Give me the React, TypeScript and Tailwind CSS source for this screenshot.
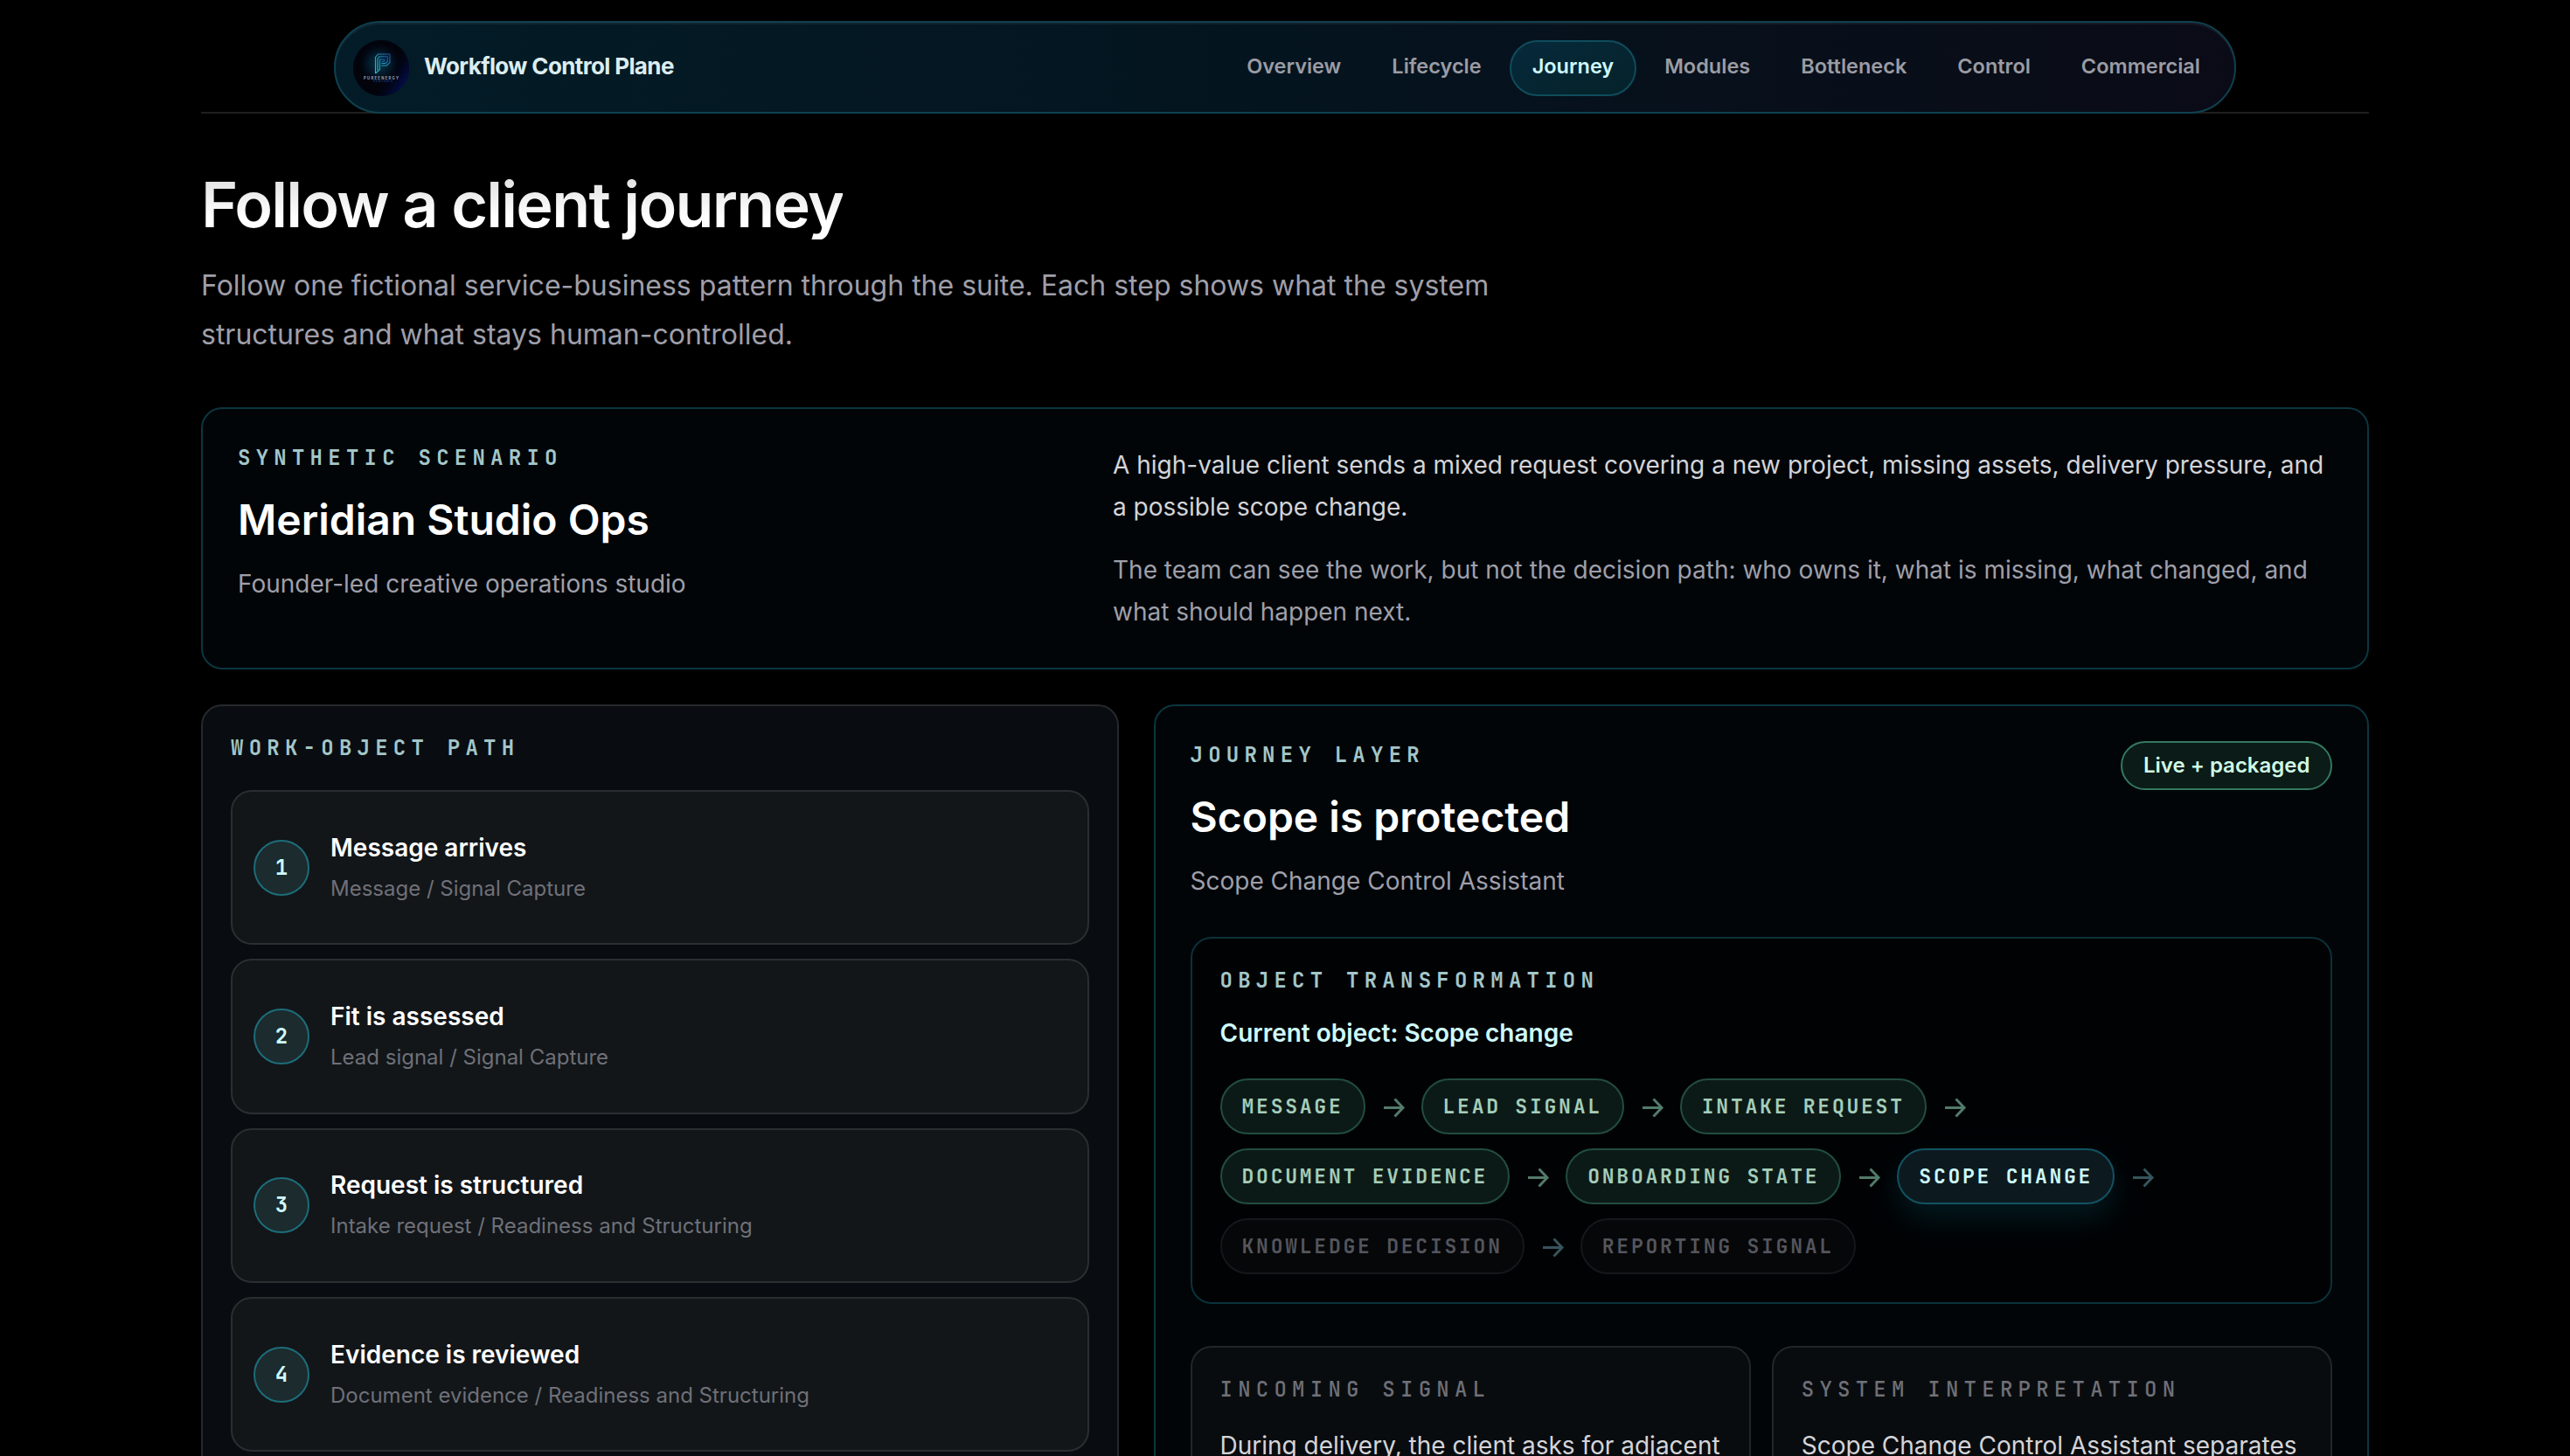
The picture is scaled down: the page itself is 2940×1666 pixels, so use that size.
import clsx from 'clsx'

type ChipState = 'done' | 'current' | 'upcoming'

interface Step {
  title: string;
  detail: string;
}

interface WorkObject {
  label: string;
  state: ChipState;
}

const navLinks = ['Overview', 'Lifecycle', 'Journey', 'Modules', 'Bottleneck', 'Control', 'Commercial']

const steps: Step[] = [
  { title: 'Message arrives', detail: 'Message / Signal Capture' },
  { title: 'Fit is assessed', detail: 'Lead signal / Signal Capture' },
  { title: 'Request is structured', detail: 'Intake request / Readiness and Structuring' },
  { title: 'Evidence is reviewed', detail: 'Document evidence / Readiness and Structuring' },
]

const workObjects: WorkObject[] = [
  { label: 'Message', state: 'done' },
  { label: 'Lead signal', state: 'done' },
  { label: 'Intake request', state: 'done' },
  { label: 'Document evidence', state: 'done' },
  { label: 'Onboarding state', state: 'done' },
  { label: 'Scope change', state: 'current' },
  { label: 'Knowledge decision', state: 'upcoming' },
  { label: 'Reporting signal', state: 'upcoming' },
]

const details = [
  { label: 'Incoming signal', text: 'During delivery, the client asks for adjacent' },
  { label: 'System interpretation', text: 'Scope Change Control Assistant separates' },
]

function Logo() {
  return (
    <svg viewBox="0 0 64 64" className="h-16 w-16 shrink-0 rounded-full">
      <defs>
        <radialGradient id="logoGlow" cx="0.47" cy="0.42" r="0.4">
          <stop offset="0" stopColor="#06394d" />
          <stop offset="0.55" stopColor="#031525" />
          <stop offset="1" stopColor="#02030c" stopOpacity="0" />
        </radialGradient>
        <linearGradient id="logoEdge" x1="0.6" y1="0.5" x2="1" y2="0.75">
          <stop offset="0" stopColor="#02030c" stopOpacity="0" />
          <stop offset="1" stopColor="#04105c" />
        </linearGradient>
        <linearGradient id="logoStroke" x1="0" y1="1" x2="1" y2="0">
          <stop offset="0" stopColor="#2ec4c9" />
          <stop offset="0.6" stopColor="#2590b8" />
          <stop offset="1" stopColor="#1c4fa0" />
        </linearGradient>
      </defs>
      <rect width="64" height="64" fill="#02030b" />
      <rect width="64" height="64" fill="url(#logoEdge)" />
      <rect width="64" height="64" fill="url(#logoGlow)" />
      <g fill="none" stroke="url(#logoStroke)" strokeWidth="1.1">
        <path d="M25.5 38V19.5l3-3.5h13.5v9.5l-3.5 3.5h-6" />
        <path d="M28 34.5V21l2-2.2h9.3v5.7l-2 2h-4.8" />
        <path d="M25.5 38l5-4.5V22h5.2v2.3h-2.5" />
      </g>
      <text x="12" y="44.6" textLength="40" fontSize="4.2" fontWeight="700" fill="#9aa3b2" className="font-['Inter',sans-serif]">PUREENERGY</text>
      <text x="23" y="48" textLength="22" fontSize="2.8" fontWeight="600" fill="#23448f" className="font-['Inter',sans-serif]">VENTURES</text>
    </svg>
  )
}

function Header() {
  return (
    <header className="flex h-[130px] justify-center border-b-2 border-[#1f1f1f] pt-6">
      <nav className="flex h-[106px] w-[2176px] shrink-0 items-start justify-between rounded-full border-2 border-[#0f4150] bg-linear-to-r from-[#031c27] via-[#04141f] to-[#0a0b16] pt-5 pr-[13px] pl-5 shadow-[inset_0_2px_0_rgba(255,255,255,0.06)]">
        <div className="flex h-16 items-center gap-[17px]">
          <Logo />
          <span className="pb-[6px] text-[26px] font-bold tracking-[-0.63px] text-[#dcedf0]">Workflow Control Plane</span>
        </div>
        <div className="flex gap-[6px]">
          {navLinks.map((link) => (
            <a
              key={link}
              className={clsx(
                'flex h-16 items-center rounded-full border-2 px-6 pb-[5px] text-[23.5px] font-semibold',
                link === 'Journey' ? 'border-[#0f4d5c] bg-linear-to-br from-[#06293b] to-[#052229] text-cyan-100' : 'border-transparent text-[#9a9ca4]'
              )}
            >
              {link}
            </a>
          ))}
        </div>
      </nav>
    </header>
  )
}

// Small monospaced heading above a title
function Eyebrow({ children, muted = false }: { children: string; muted?: boolean }) {
  return (
    <p
      className={clsx(
        "font-['JetBrains_Mono','DejaVu_Sans_Mono',monospace] text-[24px] leading-[24px] tracking-[6.25px] uppercase",
        muted ? 'font-medium text-[#6f7078]' : 'font-bold text-[#a3c6c9]'
      )}
    >
      {children}
    </p>
  )
}

function Scenario() {
  return (
    <section className="mt-[55px] grid h-[300px] grid-cols-[961px_1fr] gap-10 rounded-3xl border-2 border-[#0b363f] bg-[#010508] p-10">
      <div className="pt-1">
        <Eyebrow>Synthetic scenario</Eyebrow>
        <h2 className="mt-[31px] text-[48px] leading-[56px] font-semibold text-white">Meridian Studio Ops</h2>
        <p className="mt-[21px] text-[28px] leading-[48px] text-zinc-400">Founder-led creative operations studio</p>
      </div>
      <div className="text-[28px] leading-[48px]">
        <p className="text-zinc-300">
          A high-value client sends a mixed request covering a new project, missing assets, delivery pressure, and a possible scope change.
        </p>
        <p className="mt-6 text-zinc-400">
          The team can see the work, but not the decision path: who owns it, what is missing, what changed, and what should happen next.
        </p>
      </div>
    </section>
  )
}

function StepList() {
  return (
    <section className="rounded-3xl border-2 border-[#26282c] bg-[#090d11] px-8 pt-9">
      <Eyebrow>Work-object path</Eyebrow>
      <ol className="mt-9 flex flex-col gap-4">
        {steps.map((step, index) => (
          <li key={step.title} className="flex h-[177.33px] items-center gap-6 rounded-3xl border-2 border-[#2b2e31] bg-[#121619] px-6">
            <span className="flex h-16 w-16 items-center justify-center rounded-full border-2 border-[#1d6d7a] bg-[#1b2b2e] font-['JetBrains_Mono','DejaVu_Sans_Mono',monospace] text-[24px] font-bold text-cyan-100">
              {index + 1}
            </span>
            <div className="pt-px">
              <h3 className="text-[28px] leading-[40px] font-semibold text-white">{step.title}</h3>
              <p className="mt-[7px] text-[24px] leading-[40px] text-[#6f7078]">{step.detail}</p>
            </div>
          </li>
        ))}
      </ol>
    </section>
  )
}

function ObjectChip({ item, isLast }: { item: WorkObject; isLast: boolean }) {
  return (
    <div className="flex items-center gap-4">
      <span
        className={clsx(
          "flex h-16 items-center rounded-full border-2 px-[23px] pt-px font-['JetBrains_Mono','DejaVu_Sans_Mono',monospace] text-[23px] font-bold tracking-[2.77px] uppercase",
          item.state === 'done' && 'border-[#224d40] bg-[#0c1a17] text-[#a4cdb9]',
          item.state === 'current' && 'border-[#125362] bg-[#0c1a20] text-cyan-100 shadow-[0_16px_36px_rgba(34,211,238,0.12)]',
          item.state === 'upcoming' && 'border-[#15171a] bg-[#060709] text-[#54555c]'
        )}
      >
        {item.label}
      </span>
      {!isLast && (
        <svg
          viewBox="0 0 32 32"
          fill="none"
          strokeWidth="3"
          className={clsx('h-8 w-8', item.state === 'done' ? 'stroke-[#527b6a]' : 'stroke-[#36545c]')}
        >
          <path d="M5 17.5H27M17.5 7.5L27 17.5L17.5 27.5" />
        </svg>
      )}
    </div>
  )
}

function JourneyLayer() {
  return (
    <section className="rounded-3xl border-2 border-[#0b363f] bg-[#010508] px-10 pt-10">
      <div className="flex items-start justify-between">
        <div className="pt-1">
          <Eyebrow>Journey layer</Eyebrow>
          <h2 className="mt-[31px] text-[48px] leading-[56px] font-semibold text-white">Scope is protected</h2>
          <p className="mt-[21px] text-[28px] leading-[48px] text-zinc-400">Scope Change Control Assistant</p>
        </div>
        <span className="flex h-14 items-center rounded-full border-2 border-[#34785f] bg-[#0b1b17] px-[23.5px] text-[24px] font-semibold text-emerald-100">
          Live + packaged
        </span>
      </div>

      <div className="mt-10 h-[420px] rounded-3xl border-2 border-[#0a323a] bg-[#010204] px-8 pt-9">
        <Eyebrow>Object transformation</Eyebrow>
        <p className="mt-7 text-[28px] leading-[40px] font-semibold text-cyan-100">Current object: Scope change</p>
        <div className="mt-8 flex flex-wrap gap-4">
          {workObjects.map((item, index) => (
            <ObjectChip key={item.label} item={item} isLast={index === workObjects.length - 1} />
          ))}
        </div>
      </div>

      <div className="mt-12 grid grid-cols-2 gap-6">
        {details.map((detail) => (
          <div key={detail.label} className="h-[300px] rounded-3xl border-2 border-[#232629] bg-[#090c0f] px-8 pt-9">
            <Eyebrow muted>{detail.label}</Eyebrow>
            <p className="mt-7 text-[28px] leading-[48px] text-zinc-300">{detail.text}</p>
          </div>
        ))}
      </div>
    </section>
  )
}

export default function App() {
  return (
    <div className="h-[1666px] overflow-hidden bg-black font-['Inter',sans-serif]">
      <div className="mx-auto w-[2480px]">
        <Header />
        <main className="pt-16">
          <h1 className="w-fit bg-linear-to-b from-[#dcdcdc] to-white to-70% bg-clip-text text-[72px] leading-[80px] font-semibold tracking-tight text-transparent">
            Follow a client journey
          </h1>
          <p className="mt-[25px] w-[1520px] text-[32px] leading-[56px] text-zinc-400">
            Follow one fictional service-business pattern through the suite. Each step shows what the system structures and what stays human-controlled.
          </p>
          <Scenario />
          <div className="mt-10 grid h-[1200px] grid-cols-[1049.5px_1390.5px] gap-10">
            <StepList />
            <JourneyLayer />
          </div>
        </main>
      </div>
    </div>
  )
}
